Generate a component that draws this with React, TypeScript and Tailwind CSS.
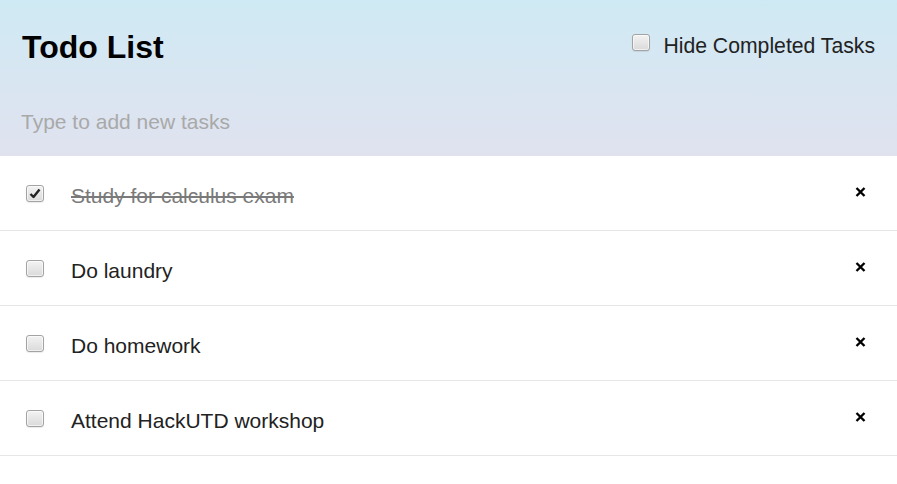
import React, { useState } from "react";

type Task = { id: number; text: string; done: boolean };

const initialTasks: Task[] = [
  { id: 1, text: "Study for calculus exam", done: true },
  { id: 2, text: "Do laundry", done: false },
  { id: 3, text: "Do homework", done: false },
  { id: 4, text: "Attend HackUTD workshop", done: false },
];

const Box = ({ checked, onClick }: { checked: boolean; onClick?: () => void }) => (
  <span
    onClick={onClick}
    className="flex items-center justify-center shrink-0 w-[18px] h-[17px] rounded-[3px] border border-[#a3a3a3] bg-gradient-to-b from-[#f3f3f3] to-[#dadada] shadow-[inset_0_0_0_1px_rgba(255,255,255,0.6),0_1px_1px_rgba(0,0,0,0.08)] cursor-pointer"
  >
    {checked && (
      <svg width="12" height="11" viewBox="0 0 12 11">
        <path d="M1.5 6 L4.5 9 L10.5 1.5" fill="none" stroke="#222" strokeWidth="2.4" strokeLinejoin="round" />
      </svg>
    )}
  </span>
);

const App = () => {
  const [tasks, setTasks] = useState(initialTasks);
  const [hide, setHide] = useState(false);

  const shown = hide ? tasks.filter((t) => !t.done) : tasks;

  return (
    <div className="w-[897px] min-h-[484px] bg-white font-['Liberation_Sans',Arial,sans-serif] text-[#222]">
      <header className="px-[21px] pt-[29px] pb-[12px] bg-gradient-to-b from-[#cfeaf4] to-[#e0e2ef]">
        <div className="flex items-start justify-between">
          <h1 className="text-[32px] leading-[36px] font-bold text-black ml-px">Todo List</h1>
          <label className="flex items-start gap-[13px] mt-[5px] mr-px text-[21.2px] leading-[24px] text-[#222]">
            <Box checked={hide} onClick={() => setHide(!hide)} />
            Hide Completed Tasks
          </label>
        </div>
        <input
          className="mt-[35px] block w-full h-[44px] bg-transparent outline-none text-[21px] placeholder:text-[#a9a9a9]"
          placeholder="Type to add new tasks"
        />
      </header>
      <ul>
        {shown.map((task) => (
          <li
            key={task.id}
            className="flex items-center h-[75px] pl-[26px] pr-[31px] border-b border-[#e6e6e6]"
          >
            <Box
              checked={task.done}
              onClick={() =>
                setTasks(tasks.map((t) => (t.id === task.id ? { ...t, done: !t.done } : t)))
              }
            />
            <span
              className={`ml-[27px] flex-1 text-[21px] leading-[24px] mt-[5px] ${
                task.done ? "line-through text-[#7a7a7a]" : "text-[#222]"
              }`}
            >
              {task.text}
            </span>
            <button
              onClick={() => setTasks(tasks.filter((t) => t.id !== task.id))}
              className="mb-[2px] cursor-pointer"
            >
              <svg width="11" height="10" viewBox="0 0 11 10">
                <path d="M1.5 1 L9.5 9 M9.5 1 L1.5 9" stroke="#000" strokeWidth="2.4" />
              </svg>
            </button>
          </li>
        ))}
      </ul>
    </div>
  );
};

export default App;
